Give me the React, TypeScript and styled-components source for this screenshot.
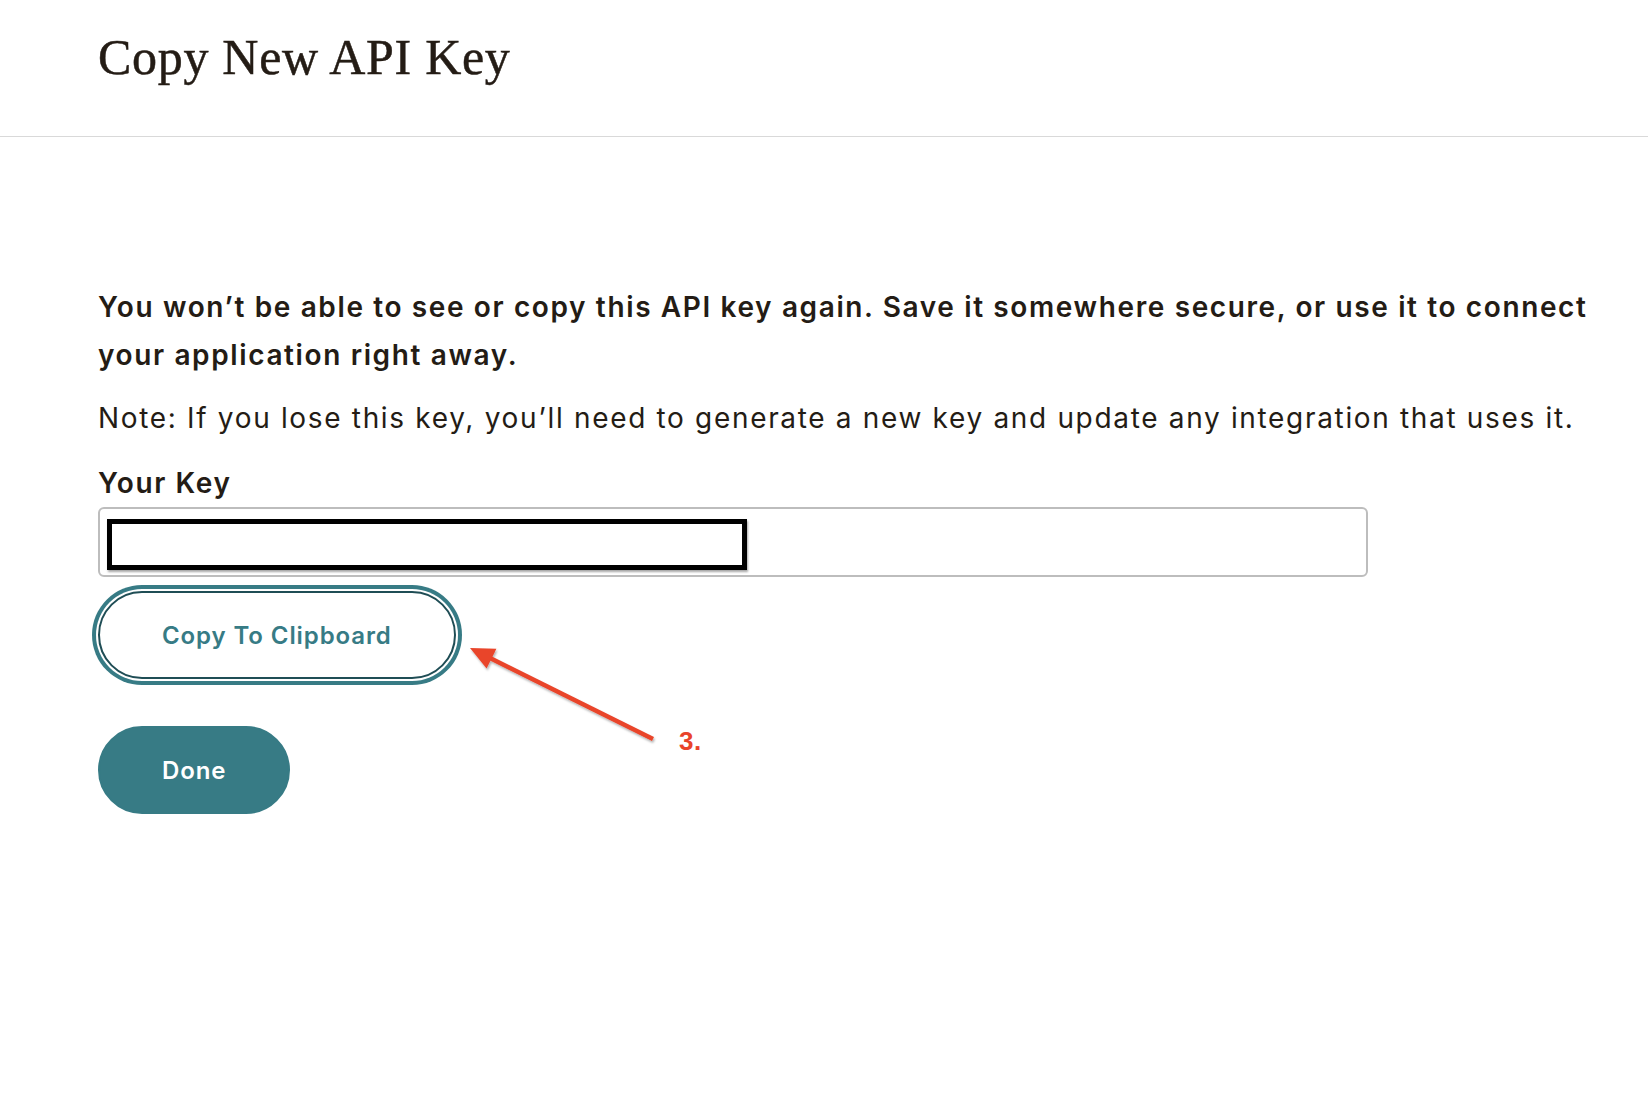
import React from "react";
import styled, { createGlobalStyle } from "styled-components";

const GlobalStyle = createGlobalStyle`
  html, body {
    margin: 0;
    padding: 0;
    background: #ffffff;
  }
  body {
    font-family: Inter, "Liberation Sans", Arial, sans-serif;
    color: #241c15;
  }
  * { box-sizing: border-box; }
`;

const Page = styled.div`
  position: relative;
  width: 1648px;
  min-height: 1108px;
  background: #ffffff;
`;

const Header = styled.header`
  padding: 27px 0 49px 98px;
  border-bottom: 1px solid #d9d9d9;
`;

const Title = styled.h1`
  margin: 0;
  font-family: "Liberation Serif", "Times New Roman", serif;
  font-weight: 400;
  font-size: 50px;
  line-height: 60px;
  letter-spacing: 0.7px;
  -webkit-text-stroke: 0.5px #241c15;
  color: #241c15;
`;

const Main = styled.main`
  padding: 146px 40px 0 98px;
`;

const Lead = styled.p`
  margin: 0;
  font-size: 28px;
  line-height: 48px;
  font-weight: 600;
  letter-spacing: 1.62px;
  color: #241c15;
`;

const Note = styled.p`
  margin: 15px 0 0;
  font-size: 28px;
  line-height: 48px;
  font-weight: 400;
  letter-spacing: 1.67px;
  color: #241c15;
`;

const Label = styled.div`
  margin-top: 19px;
  font-size: 28px;
  line-height: 45px;
  font-weight: 600;
  letter-spacing: 1.6px;
  color: #241c15;
`;

const KeyField = styled.div`
  margin-top: 1px;
  width: 1270px;
  height: 70px;
  border: 2px solid #bdbdbd;
  border-radius: 6px;
  padding: 10px 7px;
  display: flex;
  align-items: flex-start;
`;

const Redaction = styled.div`
  width: 640px;
  height: 51px;
  border: 5px solid #000000;
  background: #ffffff;
  box-shadow: 1px 2px 2px rgba(0, 0, 0, 0.35);
`;

const Actions = styled.div`
  margin-top: 14px;
  display: flex;
  flex-direction: column;
  align-items: flex-start;
  gap: 47px;
`;

const BaseButton = styled.button`
  height: 88px;
  padding: 0 62px;
  border-radius: 44px;
  font-family: Inter, "Liberation Sans", Arial, sans-serif;
  font-size: 24px;
  font-weight: 600;
  letter-spacing: 0.9px;
  cursor: pointer;
`;

const OutlineButton = styled(BaseButton)`
  background: #ffffff;
  color: #377b85;
  border: 2px solid #1f4d55;
  box-shadow: 0 0 0 2px #ffffff, 0 0 0 6px #377b85;
`;

const PrimaryButton = styled(BaseButton)`
  background: #377b85;
  color: #ffffff;
  border: 2px solid #377b85;
`;

const Overlay = styled.svg`
  position: absolute;
  left: 0;
  top: 0;
  pointer-events: none;
`;

const StepNumber = styled.span`
  position: absolute;
  left: 679px;
  top: 728px;
  font-family: "Liberation Sans", Arial, sans-serif;
  font-weight: 700;
  font-size: 26px;
  line-height: 26px;
  letter-spacing: 0.5px;
  color: #e9442a;
`;

export default function App() {
  return (
    <Page>
      <GlobalStyle />
      <Header>
        <Title>Copy New API Key</Title>
      </Header>
      <Main>
        <Lead>
          You won’t be able to see or copy this API key again. Save it somewhere
          secure, or use it to connect your application right away.
        </Lead>
        <Note>
          Note: If you lose this key, you’ll need to generate a new key and update
          any integration that uses it.
        </Note>
        <Label>Your Key</Label>
        <KeyField>
          <Redaction />
        </KeyField>
        <Actions>
          <OutlineButton type="button">Copy To Clipboard</OutlineButton>
          <PrimaryButton type="button">Done</PrimaryButton>
        </Actions>
      </Main>
      <Overlay width="1648" height="1108" viewBox="0 0 1648 1108">
        <defs>
          <filter id="arrowShadow" x="-10%" y="-10%" width="120%" height="130%">
            <feDropShadow dx="1" dy="2" stdDeviation="1.2" floodColor="#000" floodOpacity="0.3" />
          </filter>
        </defs>
        <g filter="url(#arrowShadow)" fill="#e9442a" stroke="#e9442a">
          <line x1="653" y1="739" x2="490" y2="658" strokeWidth="4.5" strokeLinecap="butt" />
          <polygon points="470,648 496.4,648.8 486.6,668.6" stroke="none" />
        </g>
      </Overlay>
      <StepNumber>3.</StepNumber>
    </Page>
  );
}
